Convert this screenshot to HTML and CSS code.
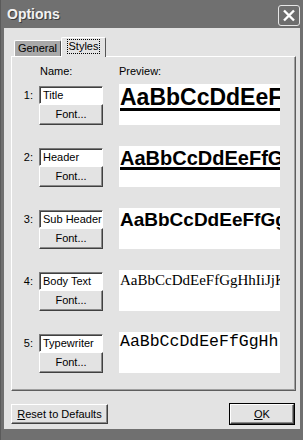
FILE: index.html
```html
<!DOCTYPE html>
<html lang="en">
<head>
    <meta charset="UTF-8">
    <meta name="viewport" content="width=device-width, initial-scale=1.0">
    <title>Options</title>
    <link rel="stylesheet" href="styles.css">
</head>
<body>
    <div class="window">
        <div class="titlebar">
            <span class="title">Options</span>
            <span class="close">
                <svg width="20" height="19" viewBox="0 0 20 19">
                    <path d="M5 4.5 L15 14.5 M15 4.5 L5 14.5" stroke="#fff" stroke-width="2.4" fill="none"/>
                </svg>
            </span>
        </div>
        <div class="client">
            <div class="tabs">
                <div class="tab">General</div>
                <div class="tab active"><span class="focus">Styles</span></div>
            </div>
            <div class="panel">
                <div class="cols">
                    <span class="col-name">Name:</span>
                    <span class="col-preview">Preview:</span>
                </div>

                <div class="row">
                    <span class="num">1:</span>
                    <div class="name">
                        <div class="field">Title</div>
                        <div class="btn">Font...</div>
                    </div>
                    <div class="preview p-title"><span>AaBbCcDdEeFfGgHh</span></div>
                </div>

                <div class="row">
                    <span class="num">2:</span>
                    <div class="name">
                        <div class="field">Header</div>
                        <div class="btn">Font...</div>
                    </div>
                    <div class="preview p-header"><span>AaBbCcDdEeFfGgHh</span></div>
                </div>

                <div class="row">
                    <span class="num">3:</span>
                    <div class="name">
                        <div class="field">Sub Header</div>
                        <div class="btn">Font...</div>
                    </div>
                    <div class="preview p-sub"><span>AaBbCcDdEeFfGgHh</span></div>
                </div>

                <div class="row">
                    <span class="num">4:</span>
                    <div class="name">
                        <div class="field">Body Text</div>
                        <div class="btn">Font...</div>
                    </div>
                    <div class="preview p-body"><span>AaBbCcDdEeFfGgHhIiJjKk</span></div>
                </div>

                <div class="row">
                    <span class="num">5:</span>
                    <div class="name">
                        <div class="field">Typewriter</div>
                        <div class="btn">Font...</div>
                    </div>
                    <div class="preview p-type"><span>AaBbCcDdEeFfGgHh</span></div>
                </div>
            </div>
            <div class="footer">
                <div class="btn btn-reset"><u>R</u>eset to Defaults</div>
                <div class="btn btn-ok"><u>O</u>K</div>
            </div>
        </div>
    </div>
</body>
</html>
```

FILE: styles.css
```css
body {
    margin: 0;
    padding: 0;
    background-color: #6c6c6c;
    font-family: "Liberation Sans", Arial, sans-serif;
    color: #000;
}
.window {
    width: 303px;
    height: 440px;
    box-sizing: border-box;
    padding: 0 3px 11px 3px;
    background-color: #707070;
    border-left: 1px solid #5a5a5a;
    display: flex;
    flex-direction: column;
}
.titlebar {
    height: 28px;
    flex: none;
    display: flex;
    align-items: center;
    justify-content: space-between;
    padding: 0 0 0 3px;
}
.title {
    color: #f2f2f2;
    font-weight: bold;
    font-size: 14px;
    text-shadow: 1px 1px 0 #3c3c3c;
}
.close {
    width: 20px;
    height: 19px;
    border: 1px solid #e6e6e6;
    border-radius: 3px;
    background-color: #6e6e6e;
    margin-top: 3px;
}
.close svg {
    display: block;
}
.client {
    flex: 1;
    background-color: #e3e3e3;
    padding: 9px 4px 0 7px;
}

/* tabs */
.tabs {
    display: flex;
    align-items: flex-end;
    height: 19px;
    padding-left: 3px;
}
.tab {
    width: 47px;
    height: 16px;
    box-sizing: border-box;
    background-color: #a9a9a9;
    border-top: 1px solid #fff;
    border-left: 1px solid #fff;
    border-right: 1px solid #555;
    border-radius: 2px 2px 0 0;
    font-size: 11px;
    line-height: 14px;
    text-align: center;
}
.tab.active {
    width: 45px;
    height: 20px;
    margin-bottom: -1px;
    background-color: #e3e3e3;
    position: relative;
    z-index: 1;
    padding-top: 2px;
    line-height: 13px;
}
.focus {
    display: inline-block;
    outline: 1px dotted #000;
    padding: 0 1px;
}

/* panel */
.panel {
    height: 335px;
    box-sizing: border-box;
    border: 1px solid;
    border-color: #fff #5e5e5e #5e5e5e #fff;
    box-shadow: inset -1px -1px 0 #a0a0a0;
    padding-top: 8px;
    font-size: 11px;
}
.cols {
    display: flex;
    height: 13px;
    line-height: 13px;
    margin-bottom: 6px;
}
.col-name {
    margin-left: 28px;
    width: 79px;
}
.row {
    display: flex;
    height: 41px;
    margin-bottom: 21px;
}
.num {
    width: 21px;
    padding-right: 6px;
    text-align: right;
    line-height: 18px;
    padding-top: 2px;
}
.name {
    width: 64px;
    margin-top: 2px;
    margin-right: 16px;
}
.field {
    height: 18px;
    box-sizing: border-box;
    background-color: #fff;
    border: 1px solid;
    border-color: #7a7a7a #fff #fff #7a7a7a;
    box-shadow: inset 1px 1px 0 #404040;
    padding-left: 3px;
    line-height: 16px;
    white-space: nowrap;
    overflow: hidden;
}
.btn {
    height: 21px;
    box-sizing: border-box;
    border: 1px solid;
    border-color: #fff #404040 #404040 #fff;
    box-shadow: inset -1px -1px 0 #8a8a8a;
    background-color: #e3e3e3;
    text-align: center;
    font-size: 11px;
    line-height: 19px;
}

/* preview boxes */
.preview {
    width: 161px;
    height: 41px;
    box-sizing: border-box;
    background-color: #fff;
    overflow: hidden;
    white-space: nowrap;
    padding: 2px 0 0 1px;
    line-height: 1;
}
.p-title {
    font-size: 23px;
    font-weight: bold;
    text-decoration: underline;
    text-decoration-thickness: 3px;
    text-underline-offset: 3px;
}
.p-header {
    font-size: 20px;
    font-weight: bold;
    text-decoration: underline;
    text-decoration-thickness: 3px;
    text-underline-offset: 2px;
}
.p-sub {
    font-size: 19px;
    font-weight: bold;
}
.p-body {
    font-family: "Liberation Serif", "Times New Roman", serif;
    font-size: 15px;
    padding-top: 3px;
}
.p-type {
    font-family: "Liberation Mono", "Courier New", monospace;
    font-size: 16.5px;
}

/* footer buttons */
.footer {
    display: flex;
    justify-content: space-between;
    padding: 13px 2px 0 0;
}
.footer .btn {
    height: 20px;
    line-height: 18px;
}
.btn-reset {
    width: 97px;
}
.btn-ok {
    width: 64px;
    outline: 1px solid #000;
    outline-offset: 0;
}
.btn-ok u, .btn-reset u {
    text-decoration: underline;
}
```
